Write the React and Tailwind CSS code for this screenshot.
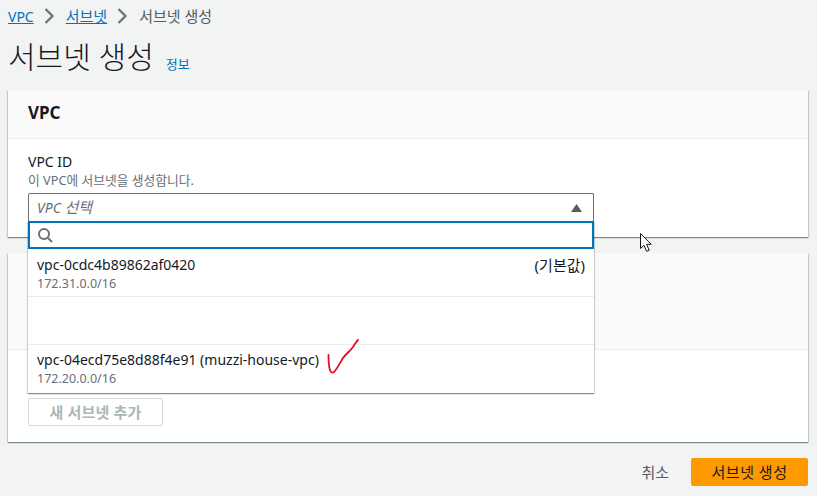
import React from 'react';

const font = { fontFamily: '"Noto Sans", "Noto Sans CJK KR", sans-serif' };

function Chevron() {
  return (
    <svg width="16" height="16" viewBox="0 0 16 16" fill="none" stroke="#687078" strokeWidth="2.2" className="mx-2">
      <path d="M3.5 1l7 7-7 7" />
    </svg>
  );
}

function Option({ name, cidr, tag, bordered, className }) {
  return (
    <div className={`h-[48px] px-[9px] ${className} ${bordered ? 'border-b border-[#eaeded]' : ''}`}>
      <div className="flex justify-between text-[14px] leading-[20px] text-[#16191f]">
        <span>{name}</span>
        {tag && <span className="text-[15px]">{tag}</span>}
      </div>
      <div className="mt-px text-[12.5px] leading-[16px] text-[#687078]">{cidr}</div>
    </div>
  );
}

export default function App() {
  return (
    <div className="relative h-[496px] w-[817px] overflow-hidden bg-[#f2f3f3] pl-2 pr-[9px]" style={font}>
      {/* Breadcrumb */}
      <div className="flex h-[32px] items-center text-[14px] text-[#545b64]">
        <a className="text-[#0073bb] underline">VPC</a>
        <Chevron />
        <a className="text-[15px] text-[#0073bb] underline">서브넷</a>
        <Chevron />
        <span className="text-[15px]">서브넷 생성</span>
      </div>

      {/* Title */}
      <div className="flex h-[58px] items-center pb-[10px] pt-[2px]">
        <h1 className="text-[30px] font-light leading-[36px] text-[#16191f]">서브넷 생성</h1>
        <a className="ml-[12px] mt-[16px] text-[13px] text-[#0073bb]">정보</a>
      </div>

      {/* VPC card */}
      <section className="h-[147px] bg-white shadow-[0_1px_1px_0_rgba(0,28,36,0.3),1px_1px_1px_0_rgba(0,28,36,0.15),-1px_1px_1px_0_rgba(0,28,36,0.15)]">
        <div className="flex h-[49px] items-center border-b border-[#eaeded] bg-[#fafafa] px-5 pb-[2px]">
          <h2 className="text-[17px] font-bold text-[#16191f]">VPC</h2>
        </div>
        <div className="px-5 pt-[13px]">
          <div className="text-[14px] leading-[20px] text-[#16191f]">VPC ID</div>
          <div className="text-[12.75px] leading-[16px] text-[#687078]">이 VPC에 서브넷을 생성합니다.</div>
          <div className="relative z-10 mt-[5px] w-[566px]">
            <div className="flex h-[28px] items-center justify-between rounded-t-[2px] border border-b-0 border-[#687078] bg-white pl-[8px] pr-[11px]">
              <span className="text-[14px] italic text-[#687078]">VPC <span className="text-[15px]">선택</span></span>
              <svg width="11" height="8" viewBox="0 0 11 8" fill="#545b64">
                <path d="M5.5 0L11 8H0z" />
              </svg>
            </div>

            {/* Open dropdown */}
            <div className="absolute left-0 top-full w-[566px] bg-white shadow-[0_1px_1px_0_rgba(0,28,36,0.3),1px_1px_1px_0_rgba(0,28,36,0.15),-1px_1px_1px_0_rgba(0,28,36,0.15)]">
              <div className="flex h-[28px] items-center border-2 border-[#0073bb] bg-white pl-[7px]">
                <svg width="16" height="16" viewBox="0 0 16 16" fill="none" stroke="#687078" strokeWidth="2">
                  <circle cx="7" cy="7" r="5" />
                  <path d="M11 11l4 4" />
                </svg>
              </div>
              <Option name="vpc-0cdc4b89862af0420" cidr="172.31.0.0/16" tag="(기본값)" bordered className="pt-[6px]" />
              <div className="h-[48px] border-b border-[#eaeded]" />
              <Option name="vpc-04ecd75e8d88f4e91 (muzzi-house-vpc)" cidr="172.20.0.0/16" className="pt-[5px]" />
            </div>
          </div>
        </div>
      </section>

      {/* Subnet card, mostly hidden behind the dropdown */}
      <section className="mt-4 h-[189px] bg-white shadow-[0_1px_1px_0_rgba(0,28,36,0.3),1px_1px_1px_0_rgba(0,28,36,0.15),-1px_1px_1px_0_rgba(0,28,36,0.15)]">
        <div className="h-[97px] border-b border-[#eaeded] bg-[#fafafa]" />
        <div className="px-5 pt-[48px]">
          <button className="h-[28px] w-[135px] rounded-[2px] border border-[#d5dbdb] bg-white text-[15px] font-bold tracking-[0.2px] text-[#aab7b8]">
            새 서브넷 추가
          </button>
        </div>
      </section>

      {/* Footer actions */}
      <div className="mt-4 flex items-center justify-end">
        <span className="mr-[22px] text-[15px] text-[#545b64]">취소</span>
        <button className="h-[28px] w-[117px] rounded-[2px] bg-[#ff9900] text-[15px] tracking-[0.5px] text-[#16191f]">서브넷 생성</button>
      </div>

      {/* Hand-drawn red check mark */}
      <svg className="absolute left-[325px] top-[336px] z-20" width="36" height="42" viewBox="0 0 36 42" fill="none" stroke="#e0101c" strokeWidth="1.8" strokeLinecap="round" strokeLinejoin="round">
        <path d="M3.5 19c0 6 0 11 1.5 15 1 3 2 3 4 2 3-3 6-9 9-14 3-4 7-7 10-11 2-3 3-5 5-7" />
      </svg>

      {/* Mouse cursor */}
      <svg className="absolute left-[639px] top-[232px] z-20" width="14" height="21" viewBox="0 0 14 21" fill="white" stroke="#16191f" strokeWidth="1">
        <path d="M1.5 1.5v15l3.5-3.2 2.6 6 2.6-1.1-2.6-5.9h4.6z" />
      </svg>
    </div>
  );
}
